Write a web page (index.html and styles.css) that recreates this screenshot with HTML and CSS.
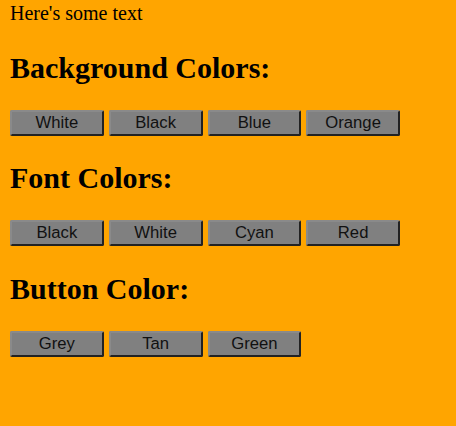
FILE: index.html
```html
<!DOCTYPE html>
<html lang="en">
<head>
  <title>Color Changer</title>
  <meta charset="UTF-8">
  <link rel="stylesheet" href="styles.css">
</head>
<body>
  <div id="text">Here's some text</div>

  <h2>Background Colors:</h2>
  <div class="row">
    <button>White</button>
    <button>Black</button>
    <button>Blue</button>
    <button>Orange</button>
  </div>

  <h2>Font Colors:</h2>
  <div class="row">
    <button>Black</button>
    <button>White</button>
    <button>Cyan</button>
    <button>Red</button>
  </div>

  <h2>Button Color:</h2>
  <div class="row">
    <button>Grey</button>
    <button>Tan</button>
    <button>Green</button>
  </div>
</body>
</html>
```

FILE: styles.css
```css
body {
  background-color: orange;
  font-family: 'Liberation Serif', serif;
  font-size: 20px;
  color: black;
  margin: 2px 10px 10px;
}

h2 {
  font-size: 30px;
  margin: 25.5px 0 25px;
}

button {
  width: 93.75px;
  height: 26px;
  padding: 0 6px;
  font-family: 'Liberation Sans', Arial, sans-serif;
  font-size: 16.67px;
  background-color: grey;
  color: #111;
  border: 2px solid;
  border-color: #8a8a8a #222 #222 #8a8a8a;
  border-radius: 2px;
}
```
